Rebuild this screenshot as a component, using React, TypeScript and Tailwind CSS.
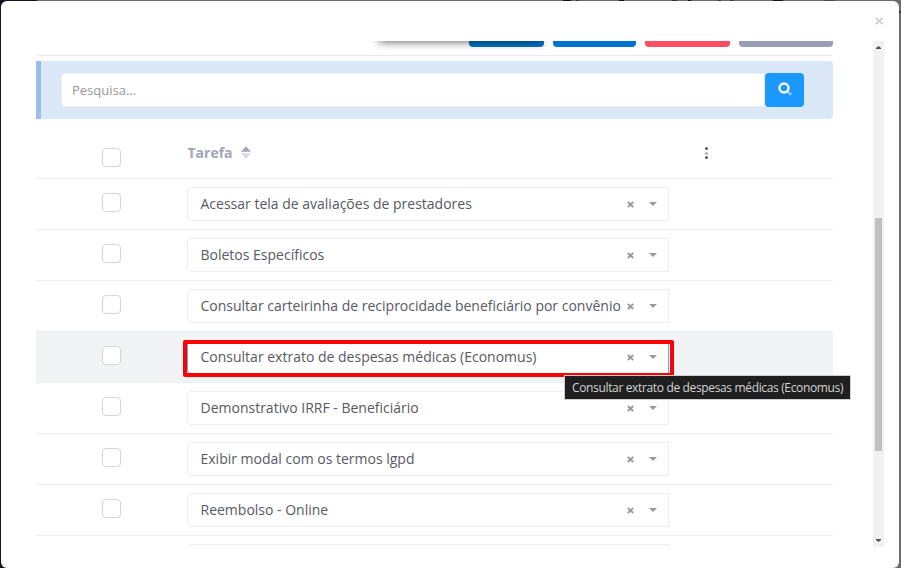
const tasks = [
  'Acessar tela de avaliações de prestadores',
  'Boletos Específicos',
  'Consultar carteirinha de reciprocidade beneficiário por convênio',
  'Consultar extrato de despesas médicas (Economus)',
  'Demonstrativo IRRF - Beneficiário',
  'Exibir modal com os termos lgpd',
  'Reembolso - Online',
  '',
];

function Checkbox() {
  return <span className="block size-[19px] shrink-0 rounded-[4px] border border-[#d5d5d8] bg-white" />;
}

function Select({ label, active }: { label: string; active: boolean }) {
  return (
    <div
      className={`relative flex h-[34px] w-[482px] shrink-0 items-center rounded-l-[4px] border bg-white pl-[12.5px] ${
        active ? 'border-[#5aa9f8]' : 'border-[#ebedf2]'
      }`}
    >
      <span className="w-[426.5px] shrink-0 whitespace-nowrap text-[14px] leading-[20px] text-[#575962]">{label}</span>
      <svg className="mt-px size-[7px] shrink-0" viewBox="0 0 7 7" stroke="#999" strokeWidth="1.8">
        <path d="M.8 1 6.2 6M6.2 1 .8 6" />
      </svg>
      <svg className="ml-[15px] h-[4px] w-[8px] shrink-0" viewBox="0 0 8 4" fill="#999">
        <path d="M0 0h8L4 4z" />
      </svg>
      {active && <div className="absolute -top-px -left-[5px] h-[37px] w-[491px] rounded-[2px] border-4 border-[#fe0000]" />}
      {active && (
        <div className="absolute top-[34px] left-[376px] z-10 flex h-[25px] w-[287px] items-center whitespace-nowrap border border-[#cfcfcf] bg-[#1f1f1f] pl-[7px] text-[12px] leading-[16px] tracking-[-0.35px] text-[#d4d4d4]">
          {label}
        </div>
      )}
    </div>
  );
}

export default function App() {
  return (
    <div className="relative flex h-[568px] w-[901px] flex-col overflow-hidden bg-[linear-gradient(90deg,#18131d_0_37px,#6b6a6e_37px)] pt-px pr-[2px] pl-px font-['Open_Sans','Noto_Sans',sans-serif]">
      <div className="absolute top-0 left-0 h-px w-full">
        <span className="absolute left-[563px] h-px w-[8px] bg-[#17121c]" />
        <span className="absolute left-[576px] h-px w-[3px] bg-[#3d3030]" />
        <span className="absolute left-[619px] h-px w-[5px] bg-[#17121c]" />
        <span className="absolute left-[672px] h-px w-[5px] bg-[#3d3030]" />
        <span className="absolute left-[688px] h-px w-[3px] bg-[#17121c]" />
        <span className="absolute left-[718px] h-px w-[3px] bg-[#3d3030]" />
        <span className="absolute left-[730px] h-px w-[3px] bg-[#3d3030]" />
        <span className="absolute left-[773px] h-px w-[10px] bg-[#17121c]" />
        <span className="absolute left-[824px] h-px w-[11px] bg-[#4b4a4e]" />
      </div>
      <div className="absolute top-[11px] right-0 h-[2px] w-[2px] bg-[#33324a]" />
      <div className="relative flex h-[567px] flex-col rounded-[6px] bg-white">
        <div className="flex h-[40px] shrink-0 justify-end pt-[16px] pr-[16px]">
          <svg className="size-[8px]" viewBox="0 0 8 8" stroke="#c9c9ca" strokeWidth="1.6">
            <path d="M.9 .7 7.5 7.3M7.5 .7 .9 7.3" />
          </svg>
        </div>
        <div className="flex h-[506px] shrink-0 justify-between overflow-hidden pr-[15px] pl-[35px]">
          <main className="w-[797px]">
            <div className="relative flex h-[15px] items-start justify-end gap-[9px] overflow-hidden rounded-b-[4px] border-b border-[#e9eaee]">
              <span className="h-[6px] w-[75px] rounded-b-[4px] bg-[#0074cc]" />
              <span className="h-[6px] w-[83px] rounded-b-[4px] bg-[#0074cc]" />
              <span className="h-[6px] w-[85px] rounded-b-[4px] bg-[#ff4d62]" />
              <span className="h-[6px] w-[94px] rounded-b-[4px] bg-[#9a9db4]" />
              <div className="absolute -top-[20px] left-[343px] h-[20px] w-[163px] shadow-[0_1px_8px_rgba(0,0,0,0.6)]" />
            </div>
            <div className="mt-[5px] flex h-[58px] items-center rounded-r-[4px] border-l-[5px] border-[#9bbde8] bg-[#dbe8f8] pl-[20px]">
              <div className="flex h-[34px] w-[704px] items-center rounded-l-[4px] border border-[#ebedf2] bg-white pt-[2px] pl-[10px] text-[13px] text-[#999]">
                Pesquisa...
              </div>
              <button className="flex h-[34px] w-[39px] items-start justify-center rounded-[4px] bg-[#1b98fe] pt-[9px]">
                <svg className="size-[14px]" viewBox="0 0 14 14" fill="none">
                  <path d="m9.3 9.3 4 3.6" stroke="#83c6fe" strokeWidth="2.6" />
                  <circle cx="6" cy="6" r="4.5" stroke="white" strokeWidth="2.4" />
                </svg>
              </button>
            </div>
            <div className="flex h-[60px] border-b border-[#ebedf2]">
              <div className="w-[151px] pt-[29px] pl-[66px]">
                <Checkbox />
              </div>
              <div className="flex w-[518px] items-start pt-[24px] pl-[0.5px] text-[14px] leading-[20px] font-bold text-[#a2a5b9]">
                Tarefa
                <svg className="mt-[3px] ml-[8.5px] h-[13px] w-[10px]" viewBox="0 0 10 13">
                  <path d="M0 5.8 5 .3l5 5.5z" fill="#a2a5b9" />
                  <path d="M0 7.2h10l-5 5.5z" fill="#dadbe5" />
                </svg>
              </div>
              <div className="flex flex-col gap-[1.5px] pt-[28px]">
                <i className="size-[3px] rounded-full bg-[#575962]" />
                <i className="size-[3px] rounded-full bg-[#aaaab0]" />
                <i className="size-[3px] rounded-full bg-[#575962]" />
              </div>
            </div>
            {tasks.map((task, i) => (
              <div key={i} className={`flex h-[51px] border-b border-[#ebedf2] pt-[8px] ${i === 3 ? 'bg-[#f2f3f5]' : ''}`}>
                <div className="w-[151px] shrink-0 pt-[6px] pl-[66px]">
                  <Checkbox />
                </div>
                <Select label={task} active={i === 3} />
              </div>
            ))}
          </main>
          <aside className="flex w-[11px] flex-col items-center bg-[#f1f1f1] pt-[5px] pb-[5px]">
            <svg className="h-[3px] w-[5px] shrink-0" viewBox="0 0 5 3" fill="#505050">
              <path d="M0 3V2L2.5 0 5 2v1z" />
            </svg>
            <span className="mt-[169px] h-[233px] w-[7px] shrink-0 bg-[#c1c1c1]" />
            <svg className="mt-auto h-[3px] w-[5px] shrink-0" viewBox="0 0 5 3" fill="#505050">
              <path d="M0 0h5v1L2.5 3 0 1z" />
            </svg>
          </aside>
        </div>
      </div>
    </div>
  );
}
